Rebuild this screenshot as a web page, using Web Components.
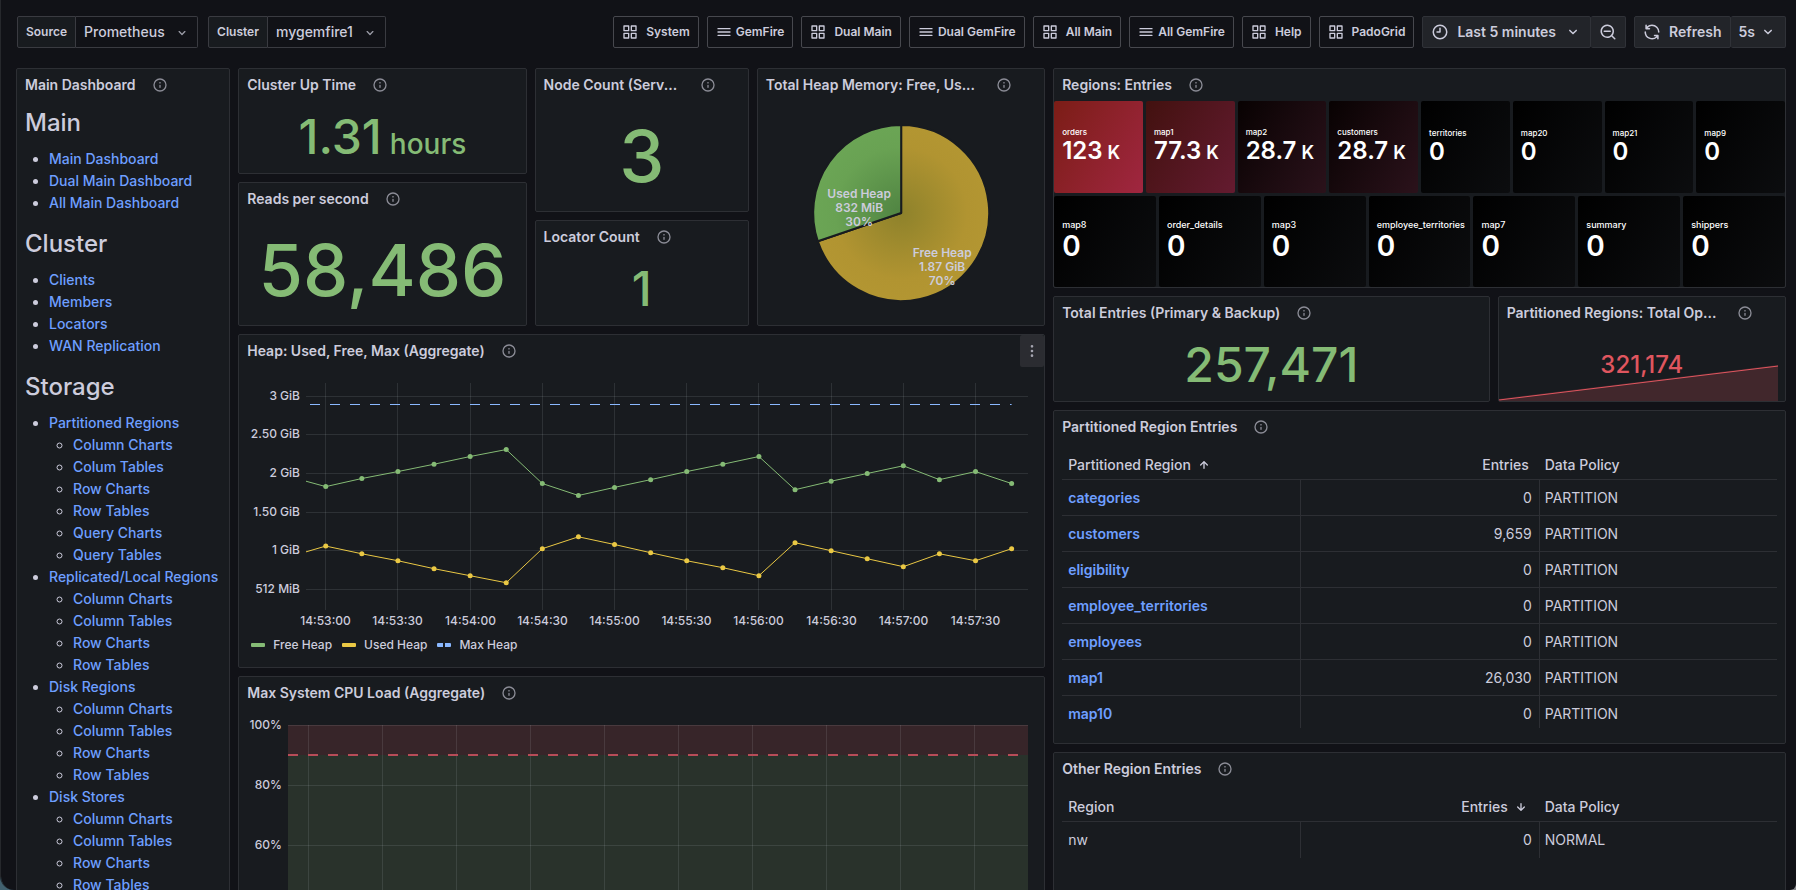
<!DOCTYPE html>
<html lang="en">
<head>
<meta charset="utf-8">
<title>GemFire – Main Dashboard</title>
<style>
  :root {
    --bg: #111217;
    --panel: #181b1f;
    --line: #2d2f34;
    --text: #ccccdc;
    --muted: #8b8c96;
    --link: #6e9fff;
    --green: #85bb75;
    --yellow: #eac844;
    --blue: #8ab8ff;
    --red: #e0565f;
  }
  html, body { margin: 0; height: 100%; }
  body {
    background: linear-gradient(90deg, #41616f 50%, #85868a 50%);
    color: var(--text);
    font: 500 14px/22px Inter, "Liberation Sans", sans-serif;
    overflow: hidden;
  }
</style>
</head>
<body>
<gf-app>
  <gf-variable slot="vars" label="Source" value="Prometheus"></gf-variable>
  <gf-variable slot="vars" label="Cluster" value="mygemfire1"></gf-variable>

  <gf-link-button slot="actions" icon="apps">System</gf-link-button>
  <gf-link-button slot="actions" icon="bars">GemFire</gf-link-button>
  <gf-link-button slot="actions" icon="apps">Dual Main</gf-link-button>
  <gf-link-button slot="actions" icon="bars">Dual GemFire</gf-link-button>
  <gf-link-button slot="actions" icon="apps">All Main</gf-link-button>
  <gf-link-button slot="actions" icon="bars">All GemFire</gf-link-button>
  <gf-link-button slot="actions" icon="apps">Help</gf-link-button>
  <gf-link-button slot="actions" icon="apps">PadoGrid</gf-link-button>
  <gf-time-controls slot="actions"></gf-time-controls>

  <gf-panel heading="Main Dashboard" style="grid-area: 1 / 1 / span 24 / span 3"><gf-nav></gf-nav></gf-panel>
  <gf-panel heading="Cluster Up Time" style="grid-area: 1 / 4 / span 3 / span 4"><gf-stat value="1.31" unit="hours"></gf-stat></gf-panel>
  <gf-panel heading="Reads per second" style="grid-area: 4 / 4 / span 4 / span 4"><gf-stat value="58,486" size="large"></gf-stat></gf-panel>
  <gf-panel heading="Node Count (Serv..." cut style="grid-area: 1 / 8 / span 4 / span 3"><gf-stat value="3" size="large"></gf-stat></gf-panel>
  <gf-panel heading="Locator Count" style="grid-area: 5 / 8 / span 3 / span 3"><gf-stat value="1"></gf-stat></gf-panel>
  <gf-panel heading="Total Heap Memory: Free, Us..." cut style="grid-area: 1 / 11 / span 7 / span 4"><gf-pie></gf-pie></gf-panel>
  <gf-panel heading="Regions: Entries" style="grid-area: 1 / 15 / span 6 / span 10"><gf-tiles></gf-tiles></gf-panel>
  <gf-panel heading="Total Entries (Primary &amp; Backup)" style="grid-area: 7 / 15 / span 3 / span 6"><gf-stat value="257,471"></gf-stat></gf-panel>
  <gf-panel heading="Partitioned Regions: Total Op..." cut style="grid-area: 7 / 21 / span 3 / span 4"><gf-stat value="321,174" size="small" spark></gf-stat></gf-panel>
  <gf-panel heading="Heap: Used, Free, Max (Aggregate)" menu style="grid-area: 8 / 4 / span 9 / span 11"><gf-timeseries kind="heap"></gf-timeseries></gf-panel>
  <gf-panel heading="Max System CPU Load (Aggregate)" style="grid-area: 17 / 4 / span 11 / span 11"><gf-timeseries kind="cpu"></gf-timeseries></gf-panel>
  <gf-panel heading="Partitioned Region Entries" style="grid-area: 10 / 15 / span 9 / span 10"><gf-table kind="partitioned"></gf-table></gf-panel>
  <gf-panel heading="Other Region Entries" style="grid-area: 19 / 15 / span 9 / span 10"><gf-table kind="other"></gf-table></gf-panel>
</gf-app>

<script>
const ICONS = {
  apps: 'M10,13H3a1,1,0,0,0-1,1v7a1,1,0,0,0,1,1h7a1,1,0,0,0,1-1V14A1,1,0,0,0,10,13ZM9,20H4V15H9ZM21,2H14a1,1,0,0,0-1,1v7a1,1,0,0,0,1,1h7a1,1,0,0,0,1-1V3A1,1,0,0,0,21,2ZM20,9H15V4h5Zm1,4H14a1,1,0,0,0-1,1v7a1,1,0,0,0,1,1h7a1,1,0,0,0,1-1V14A1,1,0,0,0,21,13Zm-1,7H15V15h5ZM10,2H3A1,1,0,0,0,2,3v7a1,1,0,0,0,1,1h7a1,1,0,0,0,1-1V3A1,1,0,0,0,10,2ZM9,9H4V4H9Z',
  bars: 'M3,8H21a1,1,0,0,0,0-2H3A1,1,0,0,0,3,8Zm18,8H3a1,1,0,0,0,0,2H21a1,1,0,0,0,0-2Zm0-5H3a1,1,0,0,0,0,2H21a1,1,0,0,0,0-2Z',
  info: 'M12,2A10,10,0,1,0,22,12,10.01114,10.01114,0,0,0,12,2Zm0,18a8,8,0,1,1,8-8A8.00917,8.00917,0,0,1,12,20Zm0-8.5a1,1,0,0,0-1,1v3a1,1,0,0,0,2,0v-3A1,1,0,0,0,12,11.5Zm0-4a1.25,1.25,0,1,0,1.25,1.25A1.25,1.25,0,0,0,12,7.5Z',
  down: 'M17,9.17a1,1,0,0,0-1.41,0L12,12.71,8.46,9.17a1,1,0,0,0-1.41,0,1,1,0,0,0,0,1.42l4.24,4.24a1,1,0,0,0,1.42,0L17,10.59A1,1,0,0,0,17,9.17Z',
  clock: 'M12,2A10,10,0,1,0,22,12,10,10,0,0,0,12,2Zm0,18a8,8,0,1,1,8-8A8,8,0,0,1,12,20ZM12,6a1,1,0,0,0-1,1v4H8a1,1,0,0,0,0,2h4a1,1,0,0,0,1-1V7A1,1,0,0,0,12,6Z',
  zoomout: 'M21.71,20.29,18,16.61A9,9,0,1,0,16.61,18l3.68,3.68a1,1,0,0,0,1.42,0A1,1,0,0,0,21.71,20.29ZM11,18a7,7,0,1,1,7-7A7,7,0,0,1,11,18Zm4-8H7a1,1,0,0,0,0,2h8a1,1,0,0,0,0-2Z',
  sync: 'M19.91,15.51H15.38a1,1,0,0,0,0,2h2.4A8,8,0,0,1,4,12a1,1,0,1,0-2,0,10,10,0,0,0,16.88,7.23V21a1,1,0,0,0,2,0V16.5A1,1,0,0,0,19.91,15.51ZM12,2A10,10,0,0,0,5.12,4.77V3a1,1,0,0,0-2,0V7.5a1,1,0,0,0,1,1h4.5a1,1,0,0,0,0-2H6.22A8,8,0,0,1,20,12a1,1,0,0,0,2,0A10,10,0,0,0,12,2Z',
  up: 'M17.71,11.29l-5-5a1,1,0,0,0-.33-.21,1,1,0,0,0-.76,0,1,1,0,0,0-.33.21l-5,5a1,1,0,0,0,1.42,1.42L11,9.41V17a1,1,0,0,0,2,0V9.41l3.29,3.3a1,1,0,0,0,1.42,0A1,1,0,0,0,17.71,11.29Z',
  arrowdown: 'M17.71,12.71l-5,5a1,1,0,0,1-.33.21,1,1,0,0,1-.76,0,1,1,0,0,1-.33-.21l-5-5a1,1,0,0,1,1.42-1.42L11,14.59V7a1,1,0,0,1,2,0v7.59l3.29-3.3a1,1,0,0,1,1.42,0A1,1,0,0,1,17.71,12.71Z',
  dots: 'M12,7a2,2,0,1,0-2-2A2,2,0,0,0,12,7Zm0,10a2,2,0,1,0,2,2A2,2,0,0,0,12,17Zm0-7a2,2,0,1,0,2,2A2,2,0,0,0,12,10Z'
};

class Base extends HTMLElement {
  constructor() { super(); this.attachShadow({ mode: 'open' }); }
  connectedCallback() { this.shadowRoot.innerHTML = this.view(); this.ready(); }
  ready() {}
}

class GfIcon extends Base {
  view() {
    const s = this.getAttribute('size') || 16;
    return `<style>:host{display:inline-flex;flex:none}svg{display:block;fill:currentColor}</style>
      <svg width="${s}" height="${s}" viewBox="0 0 24 24" aria-hidden="true"><path d="${ICONS[this.getAttribute('name')]}"/></svg>`;
  }
}

class GfApp extends Base {
  view() {
    return `<style>
      :host { display: flex; flex-direction: column; box-sizing: border-box; height: 100%; overflow: hidden auto; scrollbar-width: none;
        background: var(--bg); border-left: 1px solid #26282c; border-radius: 0 0 6px 14px; }
      header { display: flex; justify-content: space-between; padding: 16px 10px 20px 16px; }
      .vars { display: flex; gap: 10px; }
      .actions { display: flex; gap: 8px; }
      main { display: grid; grid-template-columns: repeat(24, minmax(0, 1fr)); grid-auto-rows: 30px; gap: 8px; padding: 0 10px 0 15px; }
    </style>
    <header><div class="vars"><slot name="vars"></slot></div><div class="actions"><slot name="actions"></slot></div></header>
    <main><slot></slot></main>`;
  }
}

class GfVariable extends Base {
  view() {
    return `<style>
      :host { display: flex; position: relative; box-sizing: border-box; height: 32px; }
      label { display: flex; align-items: center; padding: 0 8px; background: var(--panel); font-size: 12px; font-weight: 600;
        border: 1px solid #3a3b41; border-radius: 2px 0 0 2px; }
      select { appearance: none; margin: 0; padding: 0 32px 0 8px; background: var(--bg); color: var(--text); font: inherit;
        border: 1px solid #3a3b41; border-left: 0; border-radius: 0 2px 2px 0; }
      gf-icon { position: absolute; right: 8px; top: 9px; pointer-events: none; color: #9a9ba6; }
    </style>
    <label for="v">${this.getAttribute('label')}</label><select id="v"><option>${this.getAttribute('value')}</option></select><gf-icon name="down"></gf-icon>`;
  }
}

class GfLinkButton extends Base {
  view() {
    const icon = this.getAttribute('icon');
    return `<style>
      :host { display: block; }
      button { display: flex; align-items: center; gap: ${icon === 'apps' ? 8 : 4}px; height: 32px; padding: 0 8px; background: transparent;
        color: var(--text); font: 600 12px/22px Inter, "Liberation Sans", sans-serif; border: 1px solid #47484e; border-radius: 2px; white-space: nowrap; }
    </style><button type="button"><gf-icon name="${icon}"></gf-icon><slot></slot></button>`;
  }
}

class GfTimeControls extends Base {
  view() {
    return `<style>
      :host { display: flex; gap: 8px; }
      .group { display: flex; }
      button { display: flex; align-items: center; gap: 8px; height: 32px; padding: 0 8px; background: #222429; color: var(--text);
        font: 600 14px/22px Inter, "Liberation Sans", sans-serif; border: 1px solid #303238; border-radius: 2px; white-space: nowrap; }
      button + button { border-left: 0; }
      .every { gap: 4px; }
    </style>
    <div class="group">
      <button type="button"><gf-icon name="clock" size="18"></gf-icon><span>Last 5 minutes</span><gf-icon name="down" size="18"></gf-icon></button>
      <button type="button" aria-label="Zoom out"><gf-icon name="zoomout" size="18"></gf-icon></button>
    </div>
    <div class="group">
      <button type="button"><gf-icon name="sync" size="18"></gf-icon><span>Refresh</span></button>
      <button type="button" class="every"><span>5s</span><gf-icon name="down" size="18"></gf-icon></button>
    </div>`;
  }
}

class GfPanel extends Base {
  view() {
    return `<style>
      :host { display: flex; flex-direction: column; position: relative; box-sizing: border-box; min-width: 0; min-height: 0; overflow: hidden;
        background: var(--panel); border: 1px solid var(--line); border-radius: 2px; }
      header { display: flex; align-items: center; flex: none; gap: 16px; height: 32px; padding: 0 32px 0 8px; }
      h2 { margin: 0; font-size: 14px; line-height: 22px; font-weight: 600; white-space: nowrap; }
      :host([cut]) h2 { flex: 1; }
      header gf-icon { color: var(--muted); }
      .body { flex: 1; min-height: 0; display: flex; flex-direction: column; }
      .menu { position: absolute; top: 0; right: 0; width: 24px; height: 32px; padding: 0; display: flex; align-items: center; justify-content: center;
        background: #2b2c31; color: #a5a5b0; border: 0; border-radius: 2px; }
    </style>
    <header><h2>${this.getAttribute('heading').replace('&', '&amp;')}</h2><gf-icon name="info"></gf-icon></header>
    ${this.hasAttribute('menu') ? '<button class="menu" type="button" aria-label="Menu"><gf-icon name="dots"></gf-icon></button>' : ''}
    <div class="body"><slot></slot></div>`;
  }
}

class GfNav extends Base {
  view() {
    const a = t => `<a href="#">${t}</a>`;
    const list = items => `<ul>${items.map(i => Array.isArray(i) ? `<li>${a(i[0])}${list(i[1])}</li>` : `<li>${a(i)}</li>`).join('')}</ul>`;
    const four = ['Column Charts', 'Column Tables', 'Row Charts', 'Row Tables'];
    return `<style>
      :host { display: block; padding: 8px; }
      h1 { margin: 0 0 11px; font-size: 24px; line-height: 28px; font-weight: 500; }
      ul { margin: 0 0 16px; padding-left: 24px; }
      ul ul { margin: 0; }
      li { white-space: nowrap; }
      a { color: var(--link); text-decoration: none; }
    </style>
    <h1>Main</h1>${list(['Main Dashboard', 'Dual Main Dashboard', 'All Main Dashboard'])}
    <h1>Cluster</h1>${list(['Clients', 'Members', 'Locators', 'WAN Replication'])}
    <h1>Storage</h1>${list([
      ['Partitioned Regions', ['Column Charts', 'Colum Tables', 'Row Charts', 'Row Tables', 'Query Charts', 'Query Tables']],
      ['Replicated/Local Regions', four], ['Disk Regions', four], ['Disk Stores', four]])}`;
  }
}

class GfStat extends Base {
  view() {
    const size = { large: 72, small: 24 }[this.getAttribute('size')] || 48;
    const unit = this.getAttribute('unit');
    return `<style>
      :host { display: grid; flex: 1; min-height: 0; }
      .value { grid-area: 1 / 1; place-self: center; display: flex; align-items: baseline; gap: 8px; color: var(${this.hasAttribute('spark') ? '--red' : '--green'});
        font-size: ${size}px; line-height: 1; font-weight: 500; }
      .unit { font-size: 28px; }
      svg { grid-area: 1 / 1; align-self: end; display: block; box-sizing: border-box; width: 100%; height: 36px; padding-right: 7px; }
    </style>
    ${this.hasAttribute('spark') ? `<svg viewBox="0 0 280 36" preserveAspectRatio="none" aria-hidden="true">
      <path d="M0 34L280 0V36H0Z" fill="#41272c"/><path d="M0 35L280 1" stroke="var(--red)" fill="none" vector-effect="non-scaling-stroke"/></svg>` : ''}
    <div class="value"><span>${this.getAttribute('value')}</span>${unit ? `<span class="unit">${unit}</span>` : ''}</div>`;
  }
}

class GfPie extends Base {
  view() {
    const cx = 143, cy = 112, r = 88;
    const a = 2 * Math.PI * 0.698;
    const x = cx + r * Math.sin(a), y = cy - r * Math.cos(a);
    const label = (lx, ly, rows) => rows.map((t, i) => `<text x="${lx}" y="${ly + i * 14}">${t}</text>`).join('');
    return `<style>
      :host { display: flex; flex: 1; min-height: 0; }
      svg { flex: 1; min-width: 0; }
      text { font-size: 12px; font-weight: 600; fill: var(--text); text-anchor: middle; }
      path { stroke: var(--panel); stroke-width: 2; stroke-linejoin: round; }
    </style>
    <svg viewBox="0 0 286 224" role="img" aria-label="Heap memory">
      <defs>
        <radialGradient id="free" gradientUnits="userSpaceOnUse" cx="${cx}" cy="${cy}" r="${r}"><stop offset="0" stop-color="#8e822b"/><stop offset=".75" stop-color="#b19431"/><stop offset="1" stop-color="#b39632"/></radialGradient>
        <radialGradient id="used" gradientUnits="userSpaceOnUse" cx="${cx}" cy="${cy}" r="${r}"><stop offset="0" stop-color="#508442"/><stop offset=".75" stop-color="#69a253"/><stop offset="1" stop-color="#6ba555"/></radialGradient>
      </defs>
      <path fill="url(#free)" d="M${cx} ${cy}V${cy - r}A${r} ${r} 0 1 1 ${x} ${y}Z"/>
      <path fill="url(#used)" d="M${cx} ${cy}L${x} ${y}A${r} ${r} 0 0 1 ${cx} ${cy - r}Z"/>
      ${label(101, 97, ['Used Heap', '832 MiB', '30%'])}
      ${label(184, 156, ['Free Heap', '1.87 GiB', '70%'])}
    </svg>`;
  }
}

class GfTiles extends Base {
  view() {
    const tile = ([name, value, c1, c2]) => {
      const [num, unit] = value.split(' ');
      return `<div class="tile" style="background:linear-gradient(120deg, ${c1 || '#000000'}, ${c2 || '#0c0d0f'})">
        <div class="name">${name}</div><div class="value">${num}${unit ? `<span class="unit">${unit}</span>` : ''}</div></div>`;
    };
    const row1 = [['orders', '123 K', '#7b1d16', '#a02640'], ['map1', '77.3 K', '#42110f', '#641b30'], ['map2', '28.7 K', '#080202', '#2b121b'],
      ['customers', '28.7 K', '#080202', '#2b121b'], ['territories', '0'], ['map20', '0'], ['map21', '0'], ['map9', '0']];
    const row2 = ['map8', 'order_details', 'map3', 'employee_territories', 'map7', 'summary', 'shippers'].map(n => [n, '0']);
    return `<style>
      :host { display: flex; flex-direction: column; flex: 1; gap: 3px; min-height: 0; }
      .row { display: flex; flex: 1; gap: 3px; --name: 8px; --value: 24px; --vline: 28px; }
      .row + .row { --name: 9px; --value: 28px; --vline: 32px; }
      .tile { flex: 1 1 0; min-width: 0; display: flex; flex-direction: column; justify-content: center; padding-left: 8px; border-radius: 2px; color: #fff; font-weight: 500; }
      .name { font-size: var(--name); line-height: 10px; white-space: nowrap; }
      .value { display: flex; align-items: baseline; gap: 5px; font-size: var(--value); line-height: var(--vline); font-weight: 600; }
      .unit { font-size: 18px; }
    </style>
    <div class="row">${row1.map(tile).join('')}</div><div class="row">${row2.map(tile).join('')}</div>`;
  }
}

/* Time series: drawn to the element's own size, over a window of 300 seconds. */
const KINDS = {
  heap: {
    pad: { l: 67, t: 16, r: 16, b: 21 }, first: 8.2, yLabels: [['3 GiB', 3], ['2.50 GiB', 2.5], ['2 GiB', 2], ['1.50 GiB', 1.5], ['1 GiB', 1], ['512 MiB', 0.5]],
    min: 0.232, max: 3.172,
    series: [
      { color: 'var(--green)', lead: 1.9, data: [1.83, 1.935, 2.025, 2.12, 2.22, 2.31, 1.87, 1.715, 1.82, 1.92, 2.025, 2.12, 2.22, 1.79, 1.9, 2, 2.1, 1.92, 2.025, 1.87] },
      { color: 'var(--yellow)', lead: 0.985, data: [1.06, 0.96, 0.87, 0.767, 0.676, 0.585, 1.026, 1.18, 1.08, 0.974, 0.87, 0.78, 0.676, 1.104, 1, 0.896, 0.793, 0.96, 0.87, 1.026] }
    ],
    flat: 2.89
  },
  cpu: {
    pad: { l: 49, t: 16, r: 16, b: 60 }, first: 8.2, yLabels: [['100%', 100], ['80%', 80], ['60%', 60], ['40%', 40], ['20%', 20], ['0%', 0]],
    min: 0, max: 100, threshold: 90, series: []
  }
};
const TIMES = ['14:53:00', '14:53:30', '14:54:00', '14:54:30', '14:55:00', '14:55:30', '14:56:00', '14:56:30', '14:57:00', '14:57:30'];

class GfTimeseries extends Base {
  view() {
    const legend = this.getAttribute('kind') === 'heap' ? `<div class="legend">
      <span class="item"><i style="background:var(--green)"></i>Free Heap</span>
      <span class="item"><i style="background:var(--yellow)"></i>Used Heap</span>
      <span class="item"><i style="background:linear-gradient(90deg, var(--blue) 6px, transparent 6px 8px, var(--blue) 8px)"></i>Max Heap</span></div>` : '';
    return `<style>
      :host { display: flex; flex-direction: column; flex: 1; min-height: 0; }
      .plot { flex: 1; min-height: 0; }
      svg { display: block; }
      text { font-size: 12px; fill: var(--text); font-weight: 500; }
      .legend { display: flex; gap: 10px; height: 28px; align-items: center; padding: 0 12px 8px; font-size: 12px; }
      .item { display: flex; align-items: center; gap: 8px; }
      .item i { width: 14px; height: 4px; border-radius: 1px; }
    </style><div class="plot"></div>${legend}`;
  }
  ready() {
    this.plot = this.shadowRoot.querySelector('.plot');
    this.draw();
    new ResizeObserver(() => this.draw()).observe(this.plot);
  }
  draw() {
    const k = KINDS[this.getAttribute('kind')];
    const w = Math.round(this.plot.clientWidth), h = Math.round(this.plot.clientHeight);
    if (!w || !h || (w === this.w && h === this.h)) return;
    this.w = w; this.h = h;
    const L = k.pad.l, T = k.pad.t, R = w - k.pad.r, B = h - k.pad.b;
    const X = s => L + (R - L) * s / 300;
    const Y = v => B - (B - T) * (v - k.min) / (k.max - k.min);
    const snap = n => Math.floor(n) + 0.5;
    let out = '';
    if (k.threshold) {
      out += `<rect x="${L}" y="${T}" width="${R - L}" height="${Y(k.threshold) - T}" fill="#372529"/>
        <rect x="${L}" y="${Y(k.threshold)}" width="${R - L}" height="${B - Y(k.threshold)}" fill="#29322b"/>`;
    }
    TIMES.forEach((t, i) => {
      const x = snap(X(k.first + i * 30));
      out += `<path d="M${x} ${T}V${B}" stroke="#f0faff" stroke-opacity=".1"/><text x="${x}" y="${B + 15}" text-anchor="middle">${t}</text>`;
    });
    k.yLabels.forEach(([t, v]) => {
      const y = snap(Y(v));
      out += `<path d="M${L} ${y}H${R}" stroke="#f0faff" stroke-opacity=".1"/><text x="${L - 6}" y="${y + 3}" text-anchor="end">${t}</text>`;
    });
    if (k.threshold) out += `<path d="M${L} ${Y(k.threshold)}H${R}" stroke="#b84c58" stroke-width="2" stroke-dasharray="10 10"/>`;
    if (k.flat) out += `<path d="M${L + 4} ${snap(Y(k.flat))}H${X(k.first + 285)}" stroke="var(--blue)" stroke-dasharray="10 10"/>`;
    k.series.forEach(s => {
      const pts = s.data.map((v, i) => [X(k.first + i * 15), Y(v)]);
      out += `<polyline points="${[[L, Y(s.lead)], ...pts].map(p => p.join()).join(' ')}" fill="none" stroke="${s.color}"/>`;
      out += pts.map(p => `<circle cx="${p[0]}" cy="${p[1]}" r="2.5" fill="${s.color}"/>`).join('');
    });
    this.plot.innerHTML = `<svg width="${w}" height="${h}">${out}</svg>`;
  }
}

class GfTable extends Base {
  view() {
    const part = this.getAttribute('kind') === 'partitioned';
    const rows = part
      ? [['categories', '0'], ['customers', '9,659'], ['eligibility', '0'], ['employee_territories', '0'], ['employees', '0'], ['map1', '26,030'], ['map10', '0']]
      : [['nw', '0']];
    return `<style>
      :host { display: block; flex: 1; min-height: 0; overflow: hidden; margin: 0 8px 15px; }
      table { width: 100%; table-layout: fixed; border-collapse: separate; border-spacing: 0; }
      th, td { box-sizing: border-box; height: 36px; padding: 0 6px; text-align: left; border-bottom: 1px solid var(--line); }
      th { height: 37px; padding-top: 7px; font-weight: 500; }
      td { font-weight: 400; }
      td + td { border-left: 1px solid var(--line); padding: 0 7px 0 5px; }
      tr:last-child td { border-bottom: 0; }
      .num { text-align: right; }
      th.num { padding-right: 10px; }
      th gf-icon { vertical-align: -3px; margin-left: 5px; }
      a { color: var(--link); text-decoration: none; font-weight: 600; }
    </style>
    <table><thead><tr>
      <th>${part ? 'Partitioned Region<gf-icon name="up"></gf-icon>' : 'Region'}</th>
      <th class="num">Entries${part ? '' : '<gf-icon name="arrowdown"></gf-icon>'}</th><th>Data Policy</th></tr></thead>
    <tbody>${rows.map(([n, e]) => `<tr><td>${part ? `<a href="#">${n}</a>` : n}</td><td class="num">${e}</td><td>${part ? 'PARTITION' : 'NORMAL'}</td></tr>`).join('')}</tbody></table>`;
  }
}

Object.entries({
  'gf-icon': GfIcon, 'gf-app': GfApp, 'gf-variable': GfVariable, 'gf-link-button': GfLinkButton, 'gf-time-controls': GfTimeControls,
  'gf-panel': GfPanel, 'gf-nav': GfNav, 'gf-stat': GfStat, 'gf-pie': GfPie, 'gf-tiles': GfTiles, 'gf-timeseries': GfTimeseries, 'gf-table': GfTable
}).forEach(([name, cls]) => customElements.define(name, cls));
</script>
</body>
</html>
